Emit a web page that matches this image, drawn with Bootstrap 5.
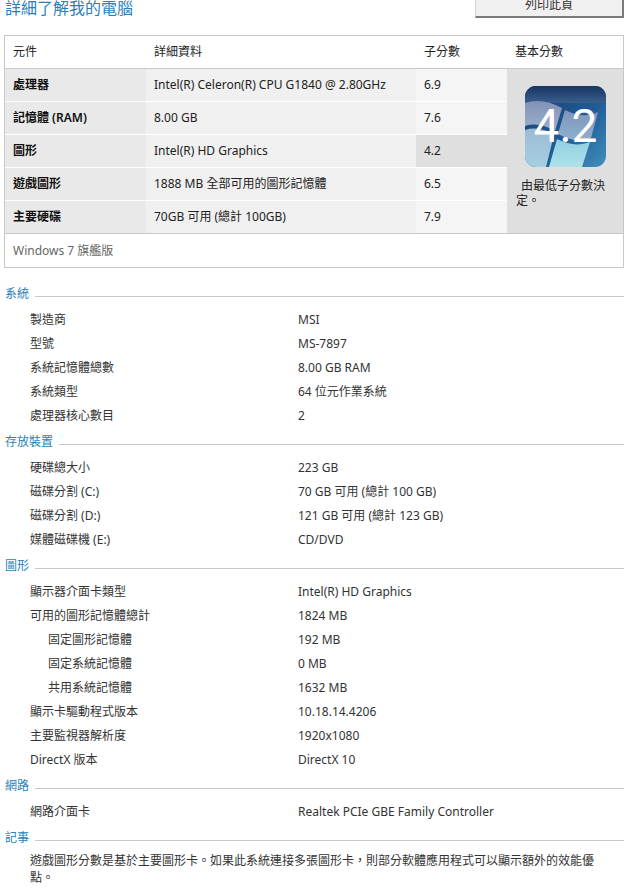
<!DOCTYPE html>
<html lang="zh-Hant">
<head>
<meta charset="utf-8">
<title>詳細了解我的電腦</title>
<link href="https://cdn.jsdelivr.net/npm/bootstrap@5.3.0/dist/css/bootstrap.min.css" rel="stylesheet">
<style>
html,body{height:895px;overflow:hidden;background:#fff}
body{font-family:"Noto Sans","Noto Sans CJK TC",sans-serif;font-size:12px;line-height:16px;color:#333;padding:0 3px 0 4px}
.top-bar{margin-top:-8px;height:43px}
.page-title{font-size:16px;line-height:16px;color:#2a7fb8;font-weight:400;margin:8px 0 0 1px}
.print-btn{width:149px;height:26px;padding:0;border-radius:0;background:#f0f0f0;border:1px solid #d5d5d5;border-right:2px solid #7a7a7a;border-bottom:2px solid #7a7a7a;font-size:12px;color:#333;line-height:16px}
.score-table{width:620px;border:1px solid #c8c8c8;border-collapse:separate;border-spacing:0;table-layout:fixed;margin:0;color:#222}
.score-table>:not(caption)>*>*{padding:0 0 0 8px;vertical-align:middle;font-weight:400;height:33px;border-bottom-width:0}
.score-table>thead>tr>th{background:#fff;border-bottom:1px solid #c8c8c8}
.score-table>tbody>tr>td{border-bottom:1px solid #fff}
.score-table>tbody>tr.last-row>td{border-bottom:1px solid #c8c8c8}
.hc1{width:141px}.hc2{width:270px}.hc3{width:91px}
.score-table>tbody>tr>td.c1{background:#e9e9e9;font-weight:600;color:#111}
.score-table>tbody>tr>td.c2{background:#f0f0f0}
.score-table>tbody>tr>td.c3{background:#f5f5f5}
.score-table>tbody>tr>td.low{background:#dfdfdf}
.score-table>tbody>tr>td.c4{background:#dfdfdf;border-bottom:1px solid #c8c8c8;vertical-align:top;padding:17px 9px 0;line-height:15px}
.badge-icon{display:block;margin:0 0 11px 9px}
.base-note{text-indent:5px}
.score-table>tbody>tr>td.edition{background:#fff;color:#666;border-bottom:0}
.sec-head{height:16px;color:#2a7fb8;gap:6px;line-height:16px;padding-left:1px;margin:6px 0}
.sec-first{margin-top:18px}
.sec-head hr{flex:1;margin:10px 0 0;border:0;border-top:1px solid #c8c8c8;opacity:1}
.sec-list{margin:0;padding:0 0 0 26px;list-style:none;color:#333}
.sec-list li{height:24px;display:flex;align-items:center}
.lbl{width:268px}
.indent .lbl{padding-left:18px}
.note{margin:0;padding-left:26px;width:596px;color:#333;line-height:17px}
</style>
</head>
<body>
<div class="top-bar d-flex justify-content-between align-items-start">
<h1 class="page-title">詳細了解我的電腦</h1>
<button class="btn print-btn" type="button">列印此頁</button>
</div>
<table class="table score-table">
<thead><tr><th class="hc1">元件</th><th class="hc2">詳細資料</th><th class="hc3">子分數</th><th>基本分數</th></tr></thead>
<tbody>
<tr><td class="c1">處理器</td><td class="c2">Intel(R) Celeron(R) CPU G1840 @ 2.80GHz</td><td class="c3">6.9</td>
<td class="c4" rowspan="5">
<svg class="badge-icon" width="81" height="81" viewBox="0 0 81 81" role="img" aria-label="4.2">
<defs>
<linearGradient id="bg" x1="0" y1="0" x2="1" y2="1"><stop offset="0" stop-color="#1a3f6c"/><stop offset=".55" stop-color="#1f5a94"/><stop offset="1" stop-color="#3f8fbd"/></linearGradient>
<linearGradient id="p1" x1="0" y1="0" x2="0" y2="1"><stop offset="0" stop-color="#8092b8"/><stop offset="1" stop-color="#9fb0cc"/></linearGradient>
<linearGradient id="p2" x1="0" y1="0" x2="0" y2="1"><stop offset="0" stop-color="#7f95bb"/><stop offset="1" stop-color="#8db0cf"/></linearGradient>
<linearGradient id="p3" x1="0" y1="0" x2="0" y2="1"><stop offset="0" stop-color="#9dbcd4"/><stop offset="1" stop-color="#a6cfe0"/></linearGradient>
<linearGradient id="p4" x1="0" y1="0" x2="0" y2="1"><stop offset="0" stop-color="#90cfe0"/><stop offset="1" stop-color="#aee2ea"/></linearGradient>
<linearGradient id="gl" x1="0" y1="0" x2="0" y2="1"><stop offset="0" stop-color="#16355f"/><stop offset="1" stop-color="#3a5f8c"/></linearGradient>
<clipPath id="cp"><rect width="81" height="81" rx="11"/></clipPath>
</defs>
<g clip-path="url(#cp)">
<rect width="81" height="81" fill="url(#bg)"/>
<rect width="81" height="17" fill="url(#gl)"/>
<path d="M0 17C12 13 24 15 37 22L30 45C20 39 10 37 0 40Z" fill="url(#p1)"/>
<path d="M40 24C52 30 63 31 73 26L66 52C56 56 46 55 33 48Z" fill="url(#p2)"/>
<path d="M0 44C10 41 20 43 29 49L21 81H0Z" fill="url(#p3)"/>
<path d="M32 53C44 59 54 60 65 56L57 81H24Z" fill="url(#p4)"/>
</g>
<text x="40.5" y="56" text-anchor="middle" font-family="Roboto,sans-serif" font-size="46" fill="#fff">4.2</text>
</svg>
<div class="base-note">由最低子分數決定。</div>
</td></tr>
<tr><td class="c1">記憶體 (RAM)</td><td class="c2">8.00 GB</td><td class="c3">7.6</td></tr>
<tr><td class="c1">圖形</td><td class="c2">Intel(R) HD Graphics</td><td class="c3 low">4.2</td></tr>
<tr><td class="c1">遊戲圖形</td><td class="c2">1888 MB 全部可用的圖形記憶體</td><td class="c3">6.5</td></tr>
<tr class="last-row"><td class="c1">主要硬碟</td><td class="c2">70GB 可用 (總計 100GB)</td><td class="c3">7.9</td></tr>
<tr><td class="edition" colspan="4">Windows 7 旗艦版</td></tr>
</tbody>
</table>

<div class="sec-head sec-first d-flex"><span>系統</span><hr></div>
<ul class="sec-list">
<li><span class="lbl">製造商</span><span>MSI</span></li>
<li><span class="lbl">型號</span><span>MS-7897</span></li>
<li><span class="lbl">系統記憶體總數</span><span>8.00 GB RAM</span></li>
<li><span class="lbl">系統類型</span><span>64 位元作業系統</span></li>
<li><span class="lbl">處理器核心數目</span><span>2</span></li>
</ul>
<div class="sec-head d-flex"><span>存放裝置</span><hr></div>
<ul class="sec-list">
<li><span class="lbl">硬碟總大小</span><span>223 GB</span></li>
<li><span class="lbl">磁碟分割 (C:)</span><span>70 GB 可用 (總計 100 GB)</span></li>
<li><span class="lbl">磁碟分割 (D:)</span><span>121 GB 可用 (總計 123 GB)</span></li>
<li><span class="lbl">媒體磁碟機 (E:)</span><span>CD/DVD</span></li>
</ul>
<div class="sec-head d-flex"><span>圖形</span><hr></div>
<ul class="sec-list">
<li><span class="lbl">顯示器介面卡類型</span><span>Intel(R) HD Graphics</span></li>
<li><span class="lbl">可用的圖形記憶體總計</span><span>1824 MB</span></li>
<li class="indent"><span class="lbl">固定圖形記憶體</span><span>192 MB</span></li>
<li class="indent"><span class="lbl">固定系統記憶體</span><span>0 MB</span></li>
<li class="indent"><span class="lbl">共用系統記憶體</span><span>1632 MB</span></li>
<li><span class="lbl">顯示卡驅動程式版本</span><span>10.18.14.4206</span></li>
<li><span class="lbl">主要監視器解析度</span><span>1920x1080</span></li>
<li><span class="lbl">DirectX 版本</span><span>DirectX 10</span></li>
</ul>
<div class="sec-head d-flex"><span>網路</span><hr></div>
<ul class="sec-list">
<li><span class="lbl">網路介面卡</span><span>Realtek PCIe GBE Family Controller</span></li>
</ul>
<div class="sec-head d-flex"><span>記事</span><hr></div>
<p class="note">遊戲圖形分數是基於主要圖形卡。如果此系統連接多張圖形卡&#xFF0C;則部分軟體應用程式可以顯示額外的效能優點。</p>
<script src="https://cdn.jsdelivr.net/npm/bootstrap@5.3.0/dist/js/bootstrap.bundle.min.js"></script>
</body>
</html>
